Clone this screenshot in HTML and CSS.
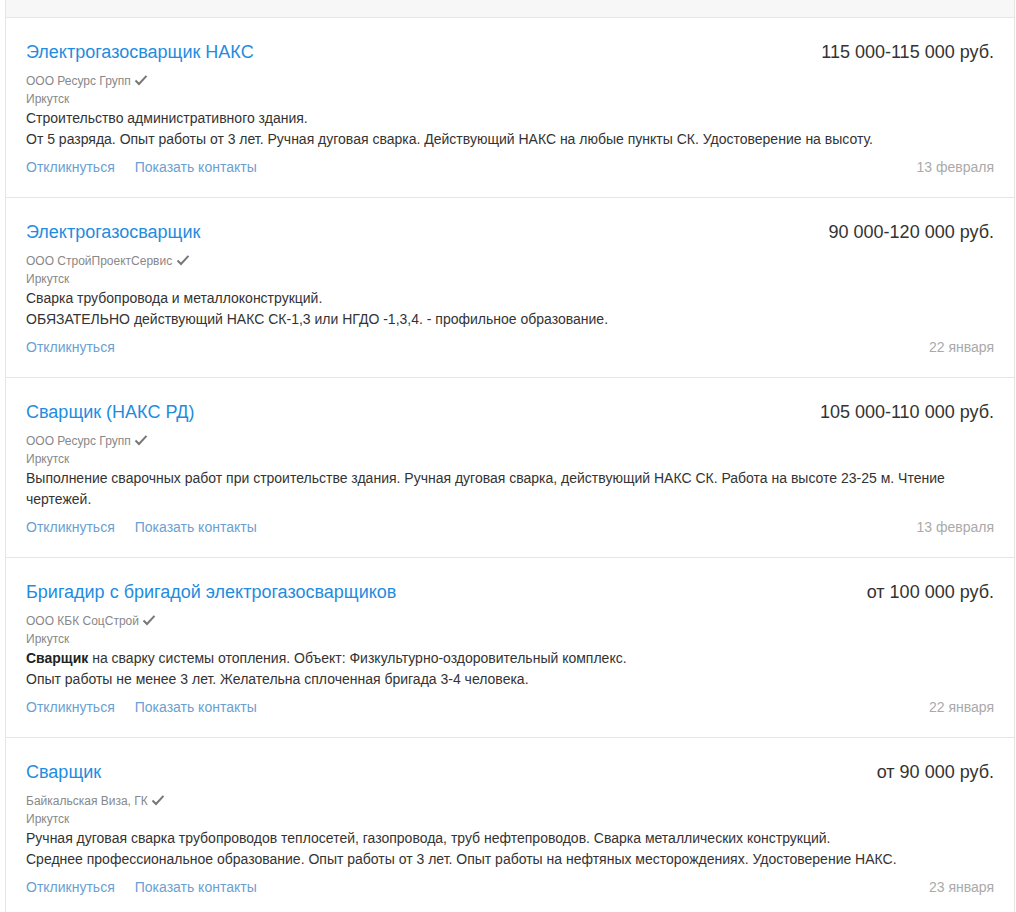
FILE: index.html
```html
<!DOCTYPE html>
<html lang="ru">
<head>
  <meta charset="UTF-8" />
  <title>Вакансии - Иркутск</title>
  <link rel="stylesheet" href="styles.css">
</head>
<body>

  <div class="vacancies">
    <div class="list-head"></div>

    <div class="vacancy">
      <div class="top">
        <a class="title" href="#">Электрогазосварщик НАКС</a>
        <span class="salary">115 000-115 000 руб.</span>
      </div>
      <div class="company">ООО Ресурс Групп <svg class="check" viewBox="0 0 14 12"><path d="M1.5 6.5 L5 10 L12.5 1.8" /></svg></div>
      <div class="city">Иркутск</div>
      <div class="desc">
        <p>Строительство административного здания.</p>
        <p>От 5 разряда. Опыт работы от 3 лет. Ручная дуговая сварка. Действующий НАКС на любые пункты СК. Удостоверение на высоту.</p>
      </div>
      <div class="bottom">
        <div class="actions">
          <a href="#">Откликнуться</a>
          <a href="#">Показать контакты</a>
        </div>
        <span class="date">13 февраля</span>
      </div>
    </div>

    <div class="vacancy">
      <div class="top">
        <a class="title" href="#">Электрогазосварщик</a>
        <span class="salary">90 000-120 000 руб.</span>
      </div>
      <div class="company">ООО СтройПроектСервис <svg class="check" viewBox="0 0 14 12"><path d="M1.5 6.5 L5 10 L12.5 1.8" /></svg></div>
      <div class="city">Иркутск</div>
      <div class="desc">
        <p>Сварка трубопровода и металлоконструкций.</p>
        <p>ОБЯЗАТЕЛЬНО действующий НАКС СК-1,3 или НГДО -1,3,4. - профильное образование.</p>
      </div>
      <div class="bottom">
        <div class="actions">
          <a href="#">Откликнуться</a>
        </div>
        <span class="date">22 января</span>
      </div>
    </div>

    <div class="vacancy">
      <div class="top">
        <a class="title" href="#">Сварщик (НАКС РД)</a>
        <span class="salary">105 000-110 000 руб.</span>
      </div>
      <div class="company">ООО Ресурс Групп <svg class="check" viewBox="0 0 14 12"><path d="M1.5 6.5 L5 10 L12.5 1.8" /></svg></div>
      <div class="city">Иркутск</div>
      <div class="desc">
        <p>Выполнение сварочных работ при строительстве здания. Ручная дуговая сварка, действующий НАКС СК. Работа на высоте 23-25 м. Чтение чертежей.</p>
      </div>
      <div class="bottom">
        <div class="actions">
          <a href="#">Откликнуться</a>
          <a href="#">Показать контакты</a>
        </div>
        <span class="date">13 февраля</span>
      </div>
    </div>

    <div class="vacancy">
      <div class="top">
        <a class="title" href="#">Бригадир с бригадой электрогазосварщиков</a>
        <span class="salary">от 100 000 руб.</span>
      </div>
      <div class="company">ООО КБК СоцСтрой <svg class="check" viewBox="0 0 14 12"><path d="M1.5 6.5 L5 10 L12.5 1.8" /></svg></div>
      <div class="city">Иркутск</div>
      <div class="desc">
        <p><b>Сварщик</b> на сварку системы отопления. Объект: Физкультурно-оздоровительный комплекс.</p>
        <p>Опыт работы не менее 3 лет. Желательна сплоченная бригада 3-4 человека.</p>
      </div>
      <div class="bottom">
        <div class="actions">
          <a href="#">Откликнуться</a>
          <a href="#">Показать контакты</a>
        </div>
        <span class="date">22 января</span>
      </div>
    </div>

    <div class="vacancy">
      <div class="top">
        <a class="title" href="#">Сварщик</a>
        <span class="salary">от 90 000 руб.</span>
      </div>
      <div class="company">Байкальская Виза, ГК <svg class="check" viewBox="0 0 14 12"><path d="M1.5 6.5 L5 10 L12.5 1.8" /></svg></div>
      <div class="city">Иркутск</div>
      <div class="desc">
        <p>Ручная дуговая сварка трубопроводов теплосетей, газопровода, труб нефтепроводов. Сварка металлических конструкций.</p>
        <p>Среднее профессиональное образование. Опыт работы от 3 лет. Опыт работы на нефтяных месторождениях. Удостоверение НАКС.</p>
      </div>
      <div class="bottom">
        <div class="actions">
          <a href="#">Откликнуться</a>
          <a href="#">Показать контакты</a>
        </div>
        <span class="date">23 января</span>
      </div>
    </div>
  </div>

</body>
</html>
```

FILE: styles.css
```css
* {
  margin: 0; padding: 0; box-sizing: border-box;
}

body {
  background: #fff;
  font-family: 'Liberation Sans', Arial, sans-serif;
  color: #333;
}

.vacancies {
  width: 1010px;
  margin-left: 5px;
  border-left: 1px solid #e6e6e6;
  border-right: 1px solid #e6e6e6;
}

.list-head {
  height: 18px;
  background: #f7f7f7;
  border-bottom: 1px solid #e6e6e6;
}

.vacancy {
  padding: 22px 20px 19px;
  border-bottom: 1px solid #e6e6e6;
}

.top {
  display: flex;
  justify-content: space-between;
  align-items: baseline;
  line-height: 24px;
  margin-bottom: 8px;
}

.title {
  font-size: 18px;
  color: #1f8ce0;
  text-decoration: none;
}

.salary {
  font-size: 18px;
  color: #333;
}

.company,
.city {
  font-size: 12px;
  line-height: 18px;
  color: #888;
}

.check {
  width: 14px;
  height: 12px;
  vertical-align: -1px;
  fill: none;
  stroke: #777;
  stroke-width: 2;
}

.desc {
  font-size: 14px;
  line-height: 21px;
  color: #333;
}

.desc b {
  font-weight: 700;
  color: #222;
}

.bottom {
  display: flex;
  justify-content: space-between;
  align-items: baseline;
  margin-top: 7px;
  font-size: 14px;
  line-height: 21px;
}

.actions {
  display: flex;
  gap: 20px;
}

.actions a {
  color: #6a9fd2;
  text-decoration: none;
}

.date {
  color: #aaa;
}
```
